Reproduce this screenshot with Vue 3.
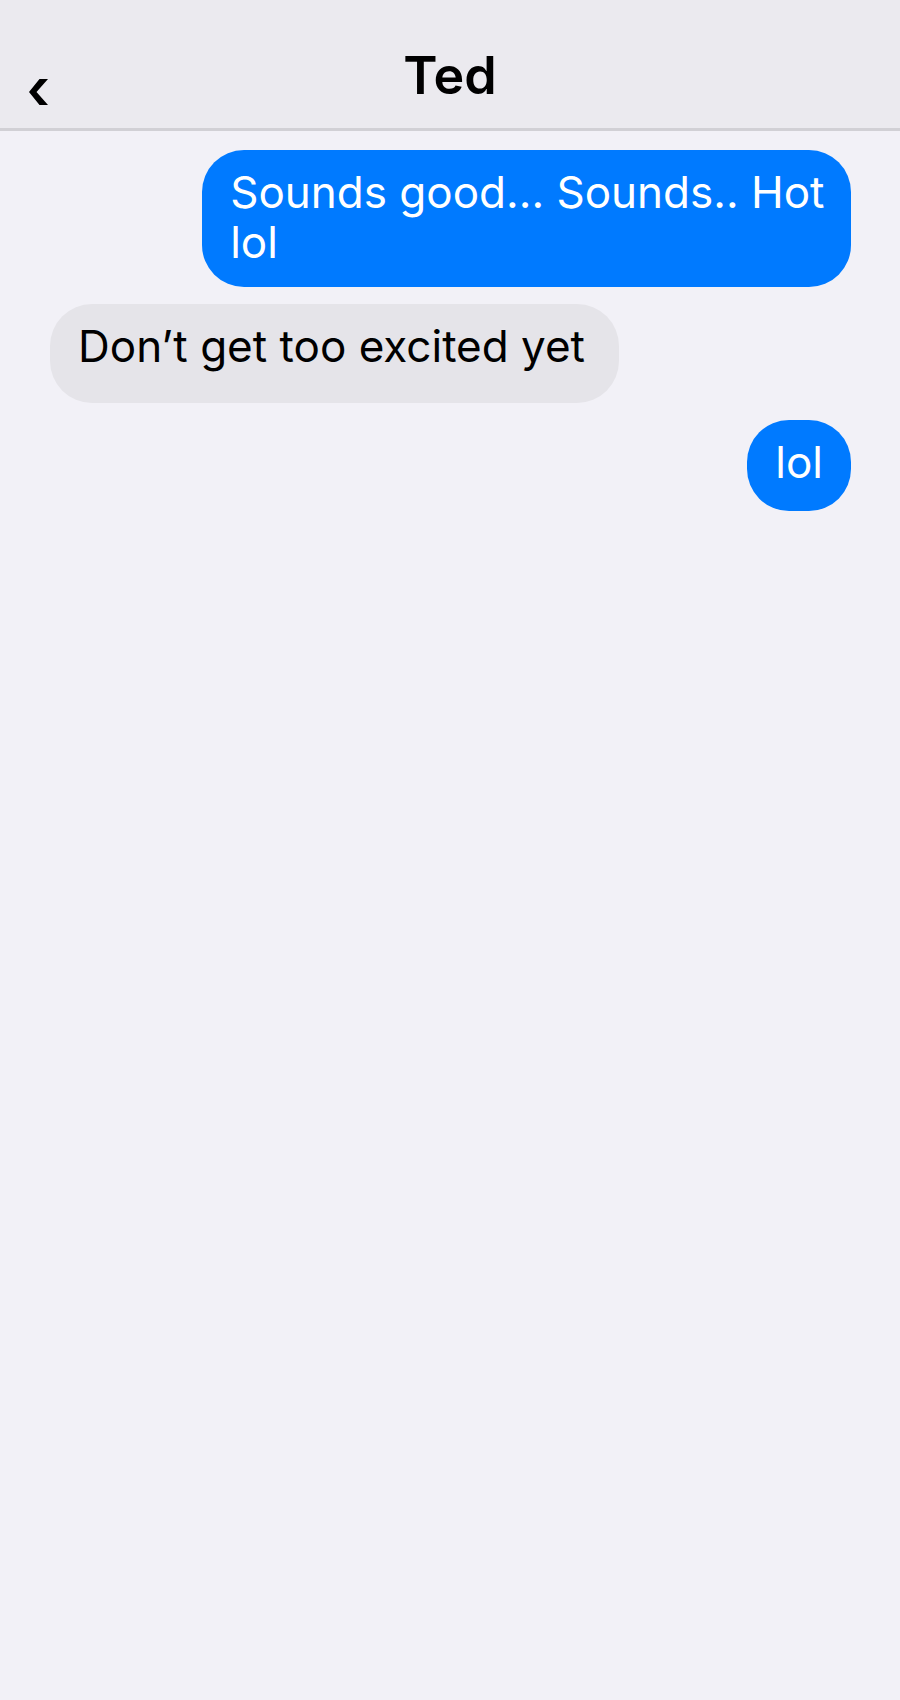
<script setup>
const messages = [
  { id: 1, from: 'me', size: 'long', text: 'Sounds good... Sounds.. Hot lol' },
  { id: 2, from: 'them', size: 'medium', text: 'Don’t get too excited yet' },
  { id: 3, from: 'me', size: 'short', text: 'lol' },
]
</script>

<template>
  <div class="screen">
    <header class="bar">
      <button class="back" type="button" aria-label="Back">
        <svg width="20" height="28" viewBox="0 0 20 28" aria-hidden="true">
          <path d="M10.500 1H19L7.500 14L19 27H10.500L0 14Z" fill="#000" />
        </svg>
      </button>
      <h1 class="name">Ted</h1>
    </header>
    <main class="thread">
      <p v-for="m in messages" :key="m.id" class="bubble" :class="[m.from, m.size]">{{ m.text }}</p>
    </main>
  </div>
</template>

<style>
body {
  margin: 0;
  background: #f2f1f7;
}
</style>

<style scoped>
.screen {
  min-height: 100vh;
  background: #f2f1f7;
  color: #000;
  font-family: Inter, "Liberation Sans", sans-serif;
}
.bar {
  display: grid;
  grid-template-columns: 80px 1fr 80px;
  padding: 46px 0 22px;
  background: #ebeaef;
  border-bottom: 3px solid #d1d0d5;
}
.back {
  display: flex;
  align-items: flex-end;
  padding: 0 0 0 29px;
  border: 0;
  background: none;
  cursor: pointer;
}
.name {
  margin: 0;
  font-size: 52px;
  font-weight: 600;
  line-height: 60px;
  text-align: center;
}
.thread {
  display: flex;
  flex-direction: column;
  gap: 17px;
  padding: 19px 49px 19px 50px;
}
.bubble {
  box-sizing: border-box;
  max-width: 81%;
  margin: 0;
  padding: 17px 28px 20px;
  border-radius: 42px;
  font-size: 44px;
  font-weight: 400;
  line-height: 50px;
}
.me {
  align-self: flex-end;
  background: #007aff;
  color: #fff;
}
.them {
  align-self: flex-start;
  background: #e5e4e9;
}
.long {
  padding-right: 20px;
}
.medium {
  padding-right: 34px;
  padding-bottom: 32px;
}
.short {
  padding-bottom: 24px;
}
</style>
